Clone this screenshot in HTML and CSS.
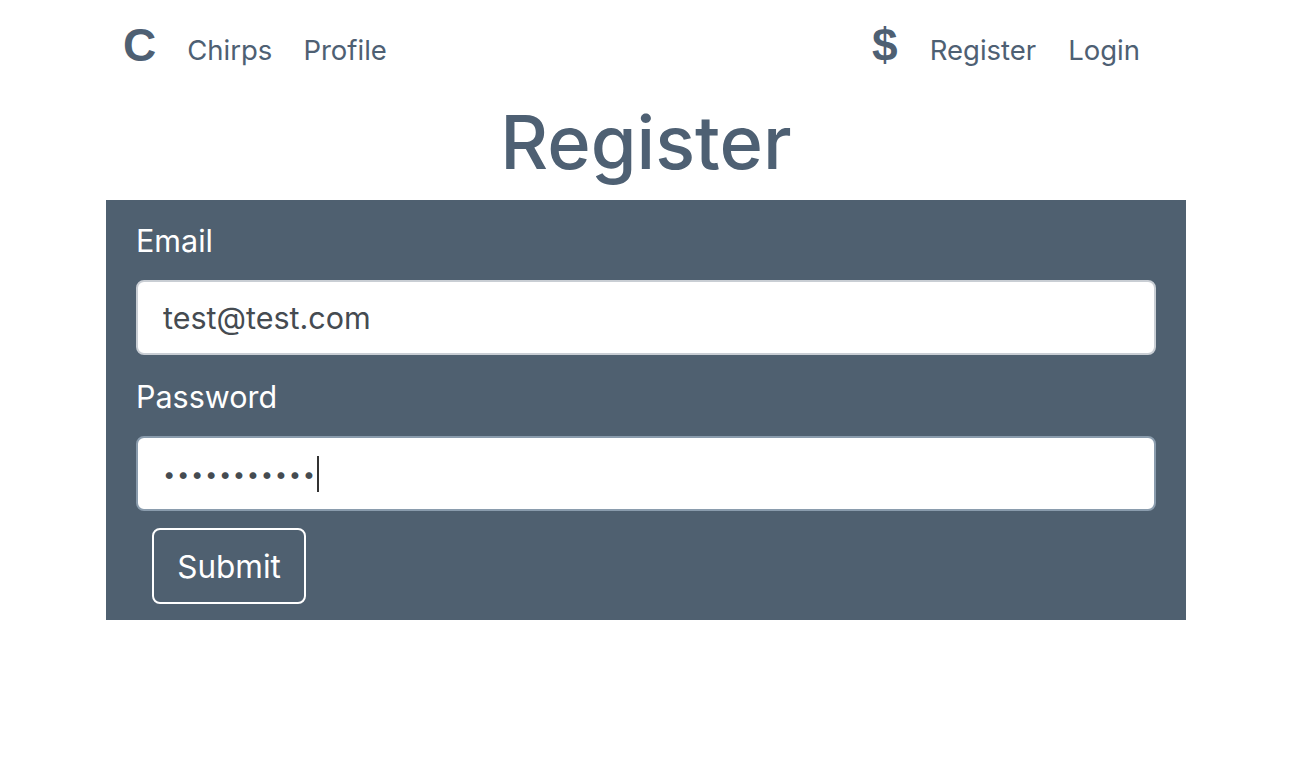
FILE: index.html
```html
<!DOCTYPE html>
<html lang="en">
<head>
<meta charset="utf-8">
<title>Register</title>
<link rel="stylesheet" href="styles.css">
</head>
<body>
<nav class="navbar">
  <div class="nav-left">
    <a class="brand" href="#">C</a>
    <a class="nav-link" href="#">Chirps</a>
    <a class="nav-link" href="#">Profile</a>
  </div>
  <div class="nav-right">
    <a class="brand dollar" href="#">$</a>
    <a class="nav-link" href="#">Register</a>
    <a class="nav-link" href="#">Login</a>
  </div>
</nav>
<h1 class="title">Register</h1>
<form class="panel">
  <label class="label" for="email">Email</label>
  <input class="field" id="email" type="email" value="test@test.com">
  <label class="label" for="pw">Password</label>
  <div class="field focused" id="pw"><span class="dots">•••••••••••</span><span class="caret"></span></div>
  <button class="submit" type="button">Submit</button>
</form>
</body>
</html>
```

FILE: styles.css
```css
* { box-sizing: border-box; }
body {
  margin: 0;
  padding-right: 6px;
  font-family: Inter, "Noto Sans", sans-serif;
  background: #fff;
  color: #4e6073;
}
.navbar {
  width: 1080px;
  margin: 0 auto;
  height: 100px;
  display: flex;
  justify-content: space-between;
  align-items: center;
  padding: 0 46px 0 17px;
}
.nav-left, .nav-right {
  display: flex;
  align-items: center;
  gap: 32px;
}
.nav-left { gap: 31px; }
.nav-link {
  color: #4e6073;
  text-decoration: none;
  font-size: 27.5px;
}
.brand {
  color: #4e6073;
  text-decoration: none;
  font-family: "Liberation Sans", Arial, sans-serif;
  font-weight: bold;
  font-size: 46px;
  line-height: 1;
  margin-top: -11px;
}
.title {
  margin: -16px 0 0;
  text-align: center;
  font-weight: 500;
  font-size: 74px;
  line-height: 116px;
  color: #4e6073;
}
.panel {
  width: 1080px;
  margin: 0 auto;
  background: #4f6070;
  padding: 23px 30px 16px;
  display: flex;
  flex-direction: column;
  align-items: stretch;
}
.label {
  color: #fff;
  font-size: 30.5px;
  line-height: 36px;
  margin-bottom: 21px;
}
.field {
  height: 75px;
  border: 2px solid #c9ced4;
  border-radius: 8px;
  background: #fff;
  font-family: Inter, "Noto Sans", sans-serif;
  font-size: 30.5px;
  color: #454b51;
  padding: 0 25px;
  margin: 0 0 24px;
  outline: none;
}
.field.focused {
  border-color: #8a9cad;
  display: flex;
  align-items: center;
  margin-bottom: 17px;
}
.dots {
  font-size: 22px;
  letter-spacing: 1.6px;
  color: #454b51;
}
.caret {
  display: inline-block;
  width: 2px;
  height: 36px;
  background: #333;
  margin-left: 0;
}
.submit {
  align-self: flex-start;
  margin-left: 16px;
  width: 154px;
  height: 76px;
  background: transparent;
  border: 2px solid #fff;
  border-radius: 8px;
  color: #fff;
  font-family: Inter, "Noto Sans", sans-serif;
  font-size: 31.5px;
}
```
